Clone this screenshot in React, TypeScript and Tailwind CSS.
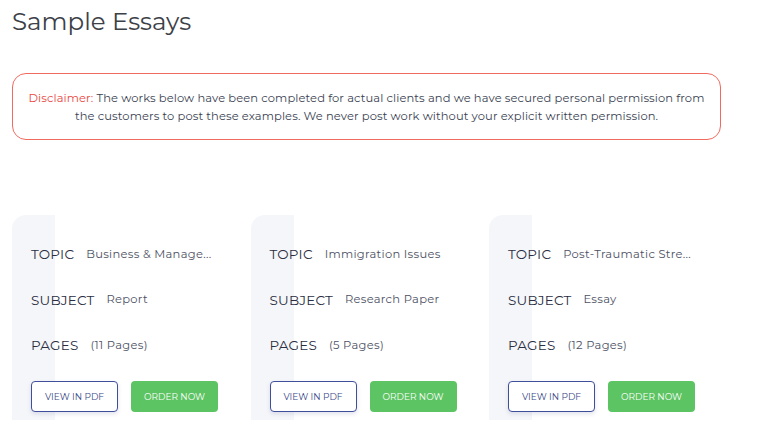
import React from 'react';

interface Essay {
    topic: string;
    subject: string;
    pages: string;
}

const essays: Essay[] = [
    {topic: 'Business & Manage...', subject: 'Report', pages: '(11 Pages)'},
    {topic: 'Immigration Issues', subject: 'Research Paper', pages: '(5 Pages)'},
    {topic: 'Post-Traumatic Stre...', subject: 'Essay', pages: '(12 Pages)'},
];

function EssayCard({essay}: {essay: Essay}) {
    const rows = [
        ['TOPIC', essay.topic],
        ['SUBJECT', essay.subject],
        ['PAGES', essay.pages],
    ];
    return (
        <div className="w-[224px] h-[205px] rounded-tl-[14px] bg-[linear-gradient(to_right,#f5f6f9_43px,#ffffff_43px)] pl-[19px] pt-[29px]">
            <div className="flex flex-col gap-[24.5px]">
                {rows.map(([label, value]) => (
                    <div key={label} className="flex items-center h-[21px]">
                        <span className="text-[13.5px] text-[#2a2e42] tracking-[0.2px]">{label}</span>
                        <span className="ml-[12px] text-[11.5px] text-[#4d5163] tracking-[0.3px]">{value}</span>
                    </div>
                ))}
            </div>
            <div className="flex gap-[13px] mt-[25px]">
                <button className="w-[87px] h-[31px] rounded-[4px] border-[1.5px] border-[#3f4f9c] bg-white text-[9px] text-[#3a4788] shadow-[0_2px_4px_rgba(60,70,140,0.15)]">
                    VIEW IN PDF
                </button>
                <button className="w-[87px] h-[31px] rounded-[4px] bg-[#5cc462] text-[9px] text-white">
                    ORDER NOW
                </button>
            </div>
        </div>
    );
}

export default function App() {
    return (
        <div className="w-[779px] h-[432px] bg-white overflow-hidden px-[12px] font-['Montserrat','Open_Sans',sans-serif]">
            <h1 className="text-[24.5px] leading-[32px] pt-[5px] text-[#3c4047]">Sample Essays</h1>

            <div className="mt-[36px] w-[709px] h-[67px] rounded-[14px] border-[1.5px] border-[#f06a60] flex items-center justify-center px-[8px]">
                <p className="text-center text-[11.5px] leading-[18px] text-[#3b3f52] tracking-[0.1px]">
                    <span className="text-[#e9473f]">Disclaimer: </span>The works below have been completed for actual clients and we have secured personal permission from the customers to post these examples. We never post work without your explicit written permission.
                </p>
            </div>

            <div className="flex gap-[14.5px] mt-[75px]">
                {essays.map(essay => (
                    <EssayCard key={essay.topic} essay={essay}/>
                ))}
            </div>
        </div>
    );
}
